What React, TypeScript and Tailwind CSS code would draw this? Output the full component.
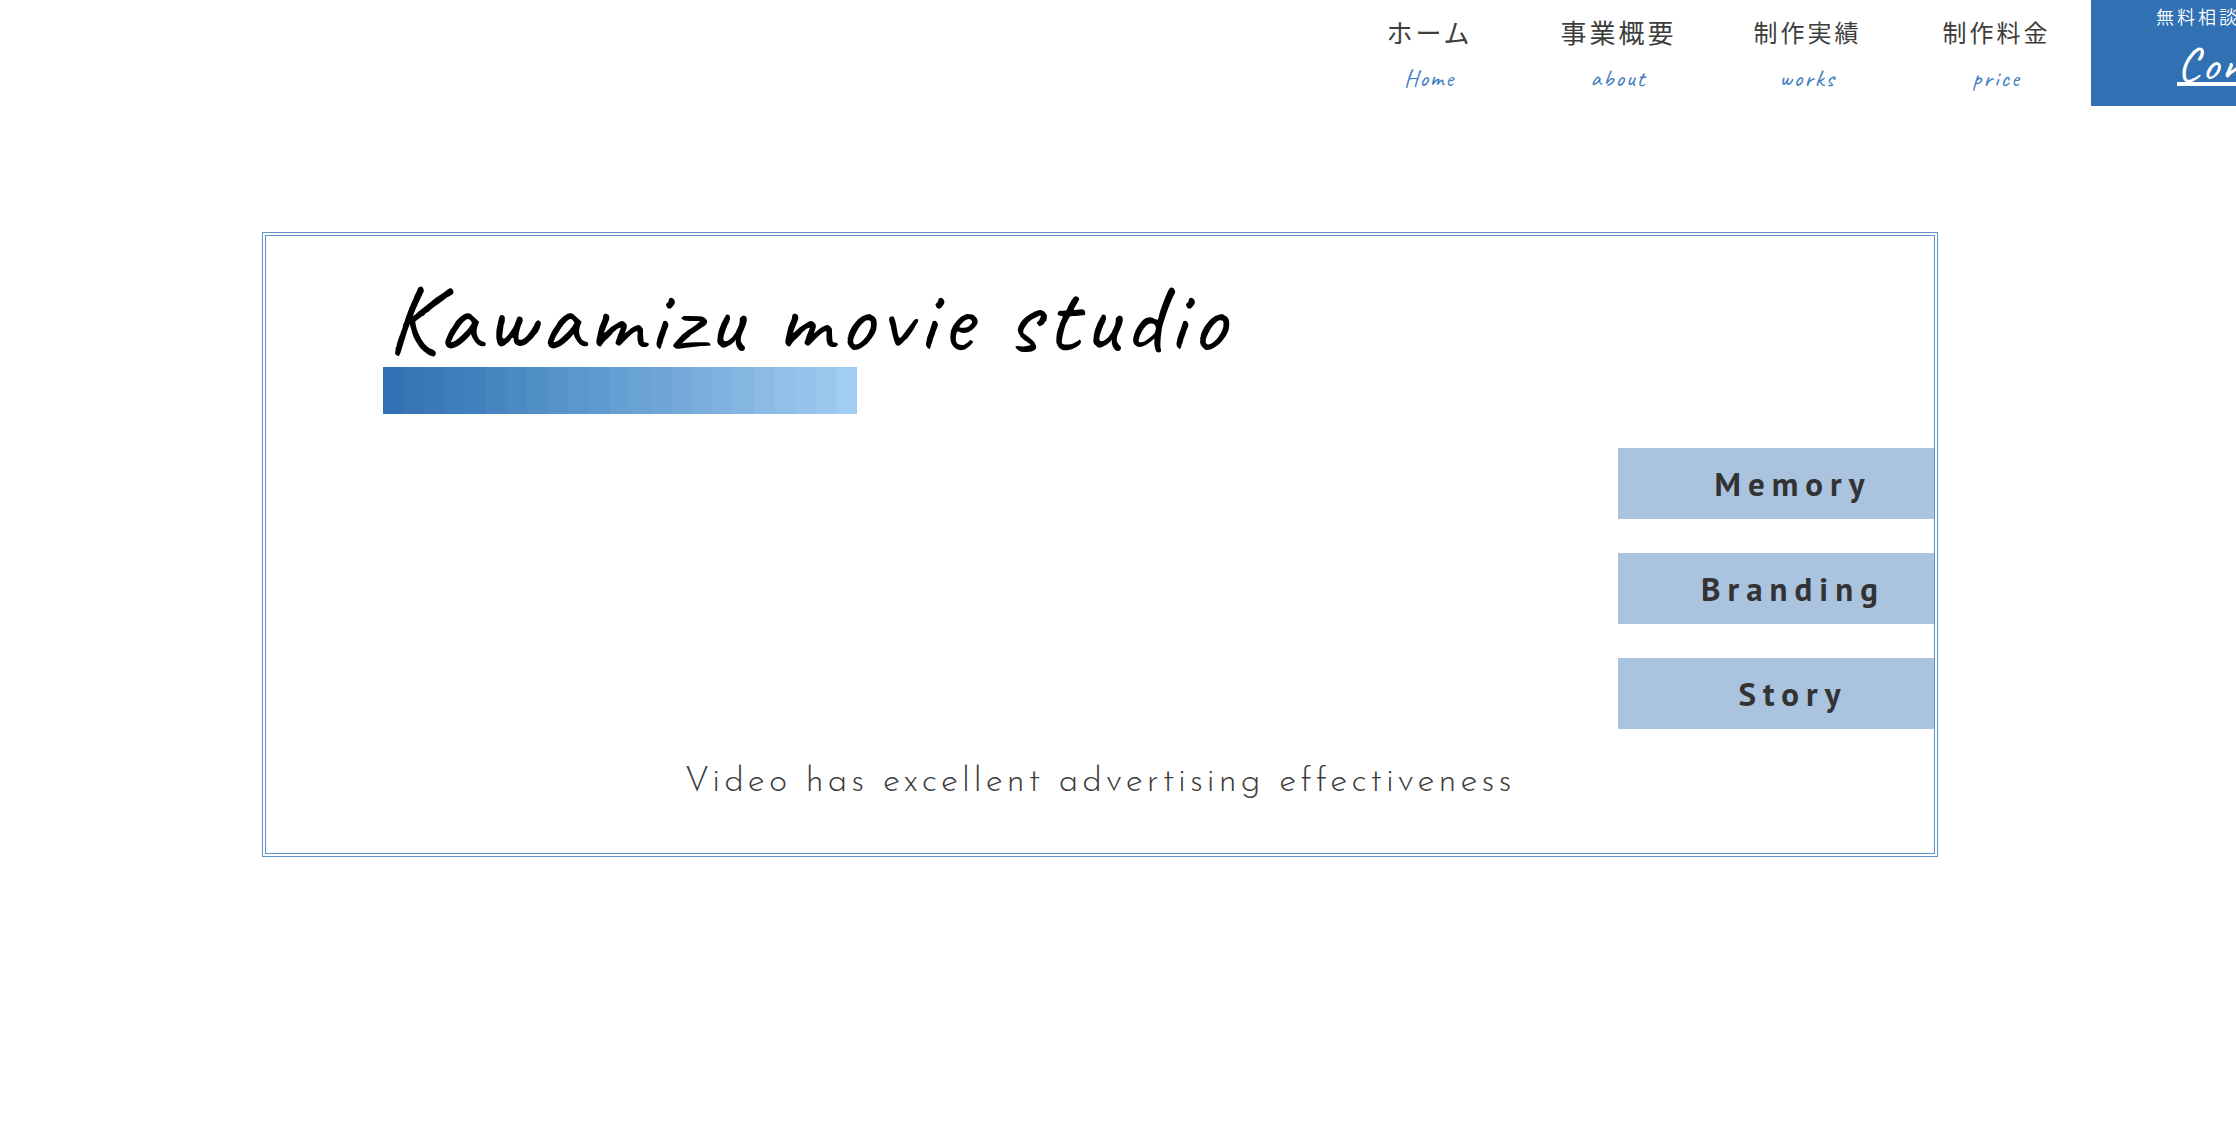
const navItems = [
  { label: "ホーム", sub: "Home", href: "#home", size: "text-[26px]" },
  { label: "事業概要", sub: "about", href: "#about", size: "text-[26px]" },
  { label: "制作実績", sub: "works", href: "#works", size: "text-2xl" },
  { label: "制作料金", sub: "price", href: "#price", size: "text-2xl" },
];

const services = ["Memory", "Branding", "Story"];

// stepped shades of the bar under the title, dark to light
const shades = [
  "bg-[#3070b3]",
  "bg-[#3974b5]",
  "bg-[#3b79b8]",
  "bg-[#3d7dbb]",
  "bg-[#4182be]",
  "bg-[#4886c2]",
  "bg-[#4b8ac3]",
  "bg-[#518fc7]",
  "bg-[#5593ca]",
  "bg-[#5997cc]",
  "bg-[#5f9bd0]",
  "bg-[#659fd3]",
  "bg-[#69a2d5]",
  "bg-[#70a5d7]",
  "bg-[#75a9da]",
  "bg-[#7aaedd]",
  "bg-[#80b2e1]",
  "bg-[#84b6e2]",
  "bg-[#8bbae6]",
  "bg-[#90bfe9]",
  "bg-[#96c3eb]",
  "bg-[#9bc7ef]",
  "bg-[#a2cdf2]",
];

function Header() {
  return (
    <header className="flex h-[106px] justify-end overflow-hidden">
      <nav className="flex">
        {navItems.map((item) => (
          <a
            key={item.sub}
            href={item.href}
            className="flex w-[189px] flex-col items-center gap-3 pt-[14px] text-[#3d3d3d]"
          >
            <span
              className={`${item.size} font-['Noto_Sans_CJK_JP',sans-serif] leading-9 tracking-[3px]`}
            >
              {item.label}
            </span>
            <span className="font-['Caveat','Lato',cursive] text-2xl leading-8 tracking-[2px] text-[#3f7cc0]">
              {item.sub}
            </span>
          </a>
        ))}
      </nav>
      <a
        href="#contact"
        className="flex w-[145px] flex-col overflow-hidden bg-[#3070b3] whitespace-nowrap text-white"
      >
        <span className="pt-[2px] pl-[65px] font-['Noto_Sans_CJK_JP',sans-serif] text-lg leading-7 font-[350] tracking-[3px]">
          無料相談
        </span>
        <span className="pt-[10px] pl-[86px] font-['Caveat','Lato',cursive] text-5xl leading-12 font-medium tracking-[2px] underline decoration-4 underline-offset-2 [text-decoration-skip-ink:none]">
          Contact
        </span>
      </a>
    </header>
  );
}

function Hero() {
  return (
    <main className="mt-[126px] mr-[298px] ml-[262px] border-4 border-double border-[#5f93c8] pt-[35px] pb-10">
      <h1 className="pl-[121px] font-['Caveat','Lato',cursive] text-[98px] leading-24 font-medium tracking-[5px] text-black">
        Kawamizu movie studio
      </h1>
      <div className="ml-[117px] flex h-[47px] w-[474px]">
        {shades.map((shade) => (
          <div key={shade} className={`flex-1 ${shade}`} />
        ))}
      </div>
      <div className="mt-[34px] flex flex-col items-end gap-[34px]">
        {services.map((name) => (
          <button
            key={name}
            type="button"
            className="h-[71px] w-[316px] bg-[#aac3df] pl-[34px] text-center font-['PT_Sans','Lato',sans-serif] text-[33px] font-bold tracking-[7px] text-[#333333]"
          >
            {name}
          </button>
        ))}
      </div>
      <p className="mt-[30px] pb-[6px] text-center font-['Josefin_Sans','Lato',sans-serif] text-[35px] leading-12 font-light tracking-[4px] text-[#3d3d3d]">
        Video has excellent advertising effectiveness
      </p>
    </main>
  );
}

export default function App() {
  return (
    <div className="min-h-screen overflow-x-hidden bg-white">
      <Header />
      <Hero />
    </div>
  );
}
